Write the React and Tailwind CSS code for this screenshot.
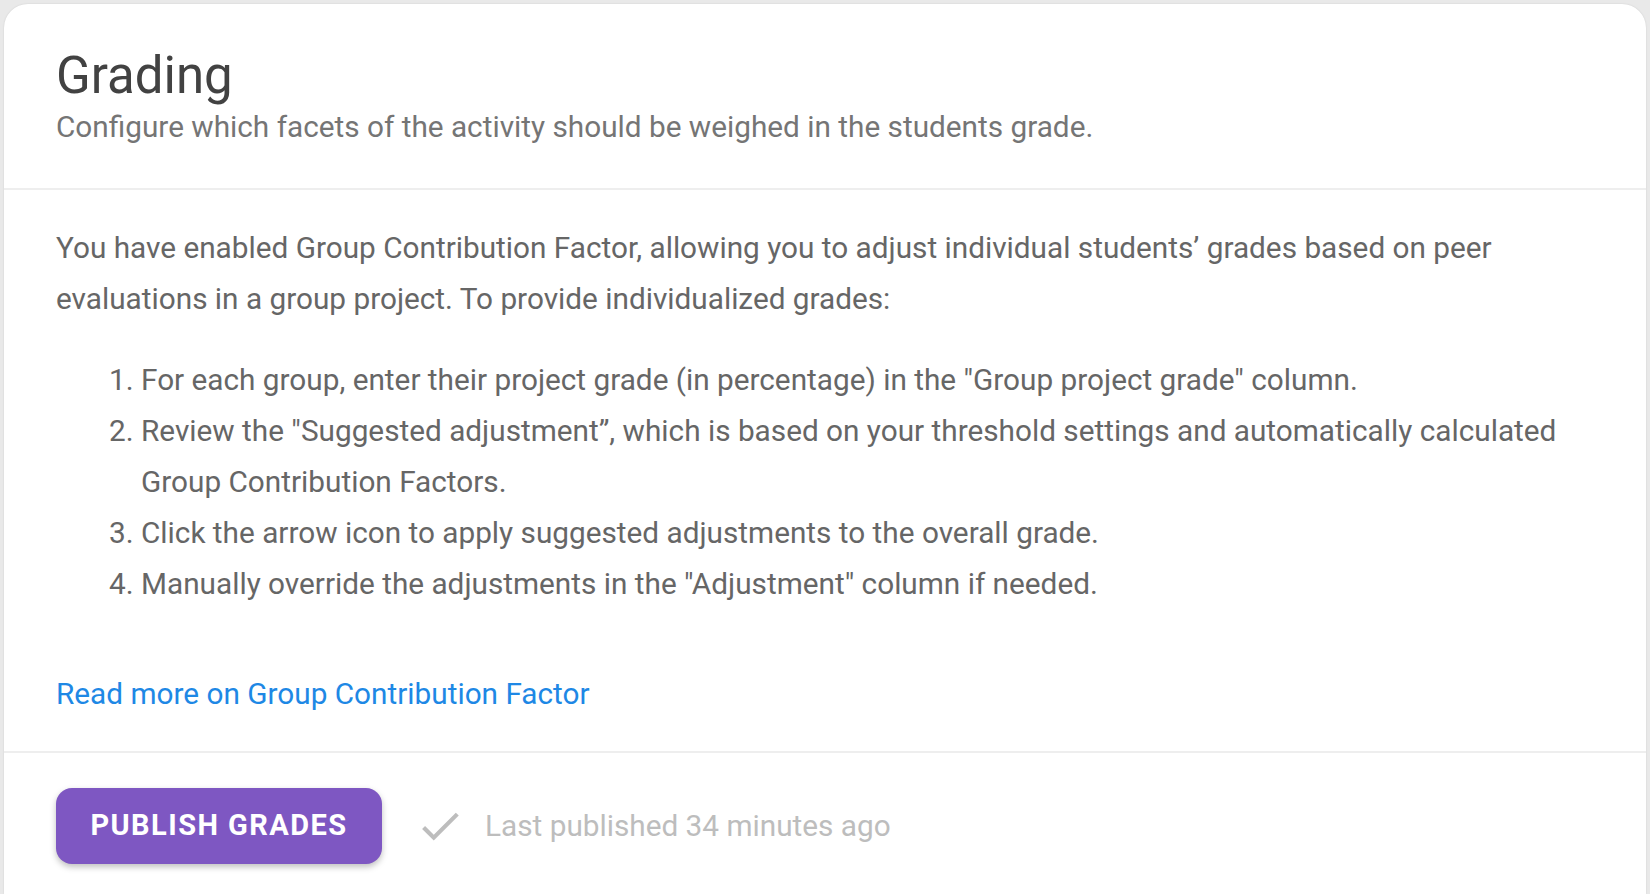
export default function App() {
  const steps = [
    'For each group, enter their project grade (in percentage) in the "Group project grade" column.',
    'Review the "Suggested adjustment\u201d, which is based on your threshold settings and automatically calculated Group Contribution Factors.',
    'Click the arrow icon to apply suggested adjustments to the overall grade.',
    'Manually override the adjustments in the "Adjustment" column if needed.',
  ]

  return (
    <div
      className="min-h-screen bg-[#e9e9e9] px-1 pt-1"
      style={{ fontFamily: 'Roboto, "Noto Sans", Arial, sans-serif' }}
    >
      <div className="min-h-[890px] rounded-t-[24px] bg-white shadow-[0_0_2px_rgba(0,0,0,0.12)]">
        {/* header */}
        <div className="border-b-2 border-[#eeeeee] px-[52px] pt-[42px] pb-[40px]">
          <h1 className="text-[51px] leading-[60px] font-normal text-[#424242]">Grading</h1>
          <p className="text-[29.75px] leading-[42px] text-[#757575]">
            Configure which facets of the activity should be weighed in the students grade.
          </p>
        </div>

        {/* body */}
        <div className="border-b-2 border-[#eeeeee] px-[52px] pt-[32px] pb-[32px]">
          <p className="pr-[100px] text-[29.75px] leading-[51px] text-[#666666]">
            You have enabled Group Contribution Factor, allowing you to adjust individual students’ grades based on peer
            evaluations in a group project. To provide individualized grades:
          </p>
          <ol className="mt-[30px] list-decimal pl-[85px] text-[29.75px] leading-[51px] text-[#666666]">
            {steps.map((s) => (
              <li key={s}>{s}</li>
            ))}
          </ol>
          <a href="#" className="mt-[59px] block text-[29.75px] leading-[51px] text-[#1e88e5]">
            Read more on Group Contribution Factor
          </a>
        </div>

        {/* footer */}
        <div className="flex items-center px-[52px] pt-[35px]">
          <button className="h-[76px] w-[326px] rounded-[16px] bg-[#7e57c2] text-[29px] font-bold tracking-[0.05em] text-white shadow-[0_3px_6px_rgba(0,0,0,0.25)]">
            PUBLISH GRADES
          </button>
          <svg className="ml-[33px] h-[50px] w-[50px]" viewBox="0 0 24 24" fill="#bdbdbd">
            <path d="M9 16.17L4.83 12l-1.42 1.41L9 19 21 7l-1.41-1.41z" />
          </svg>
          <span className="ml-[20px] text-[29.75px] text-[#bdbdbd]">Last published 34 minutes ago</span>
        </div>
      </div>
    </div>
  )
}
